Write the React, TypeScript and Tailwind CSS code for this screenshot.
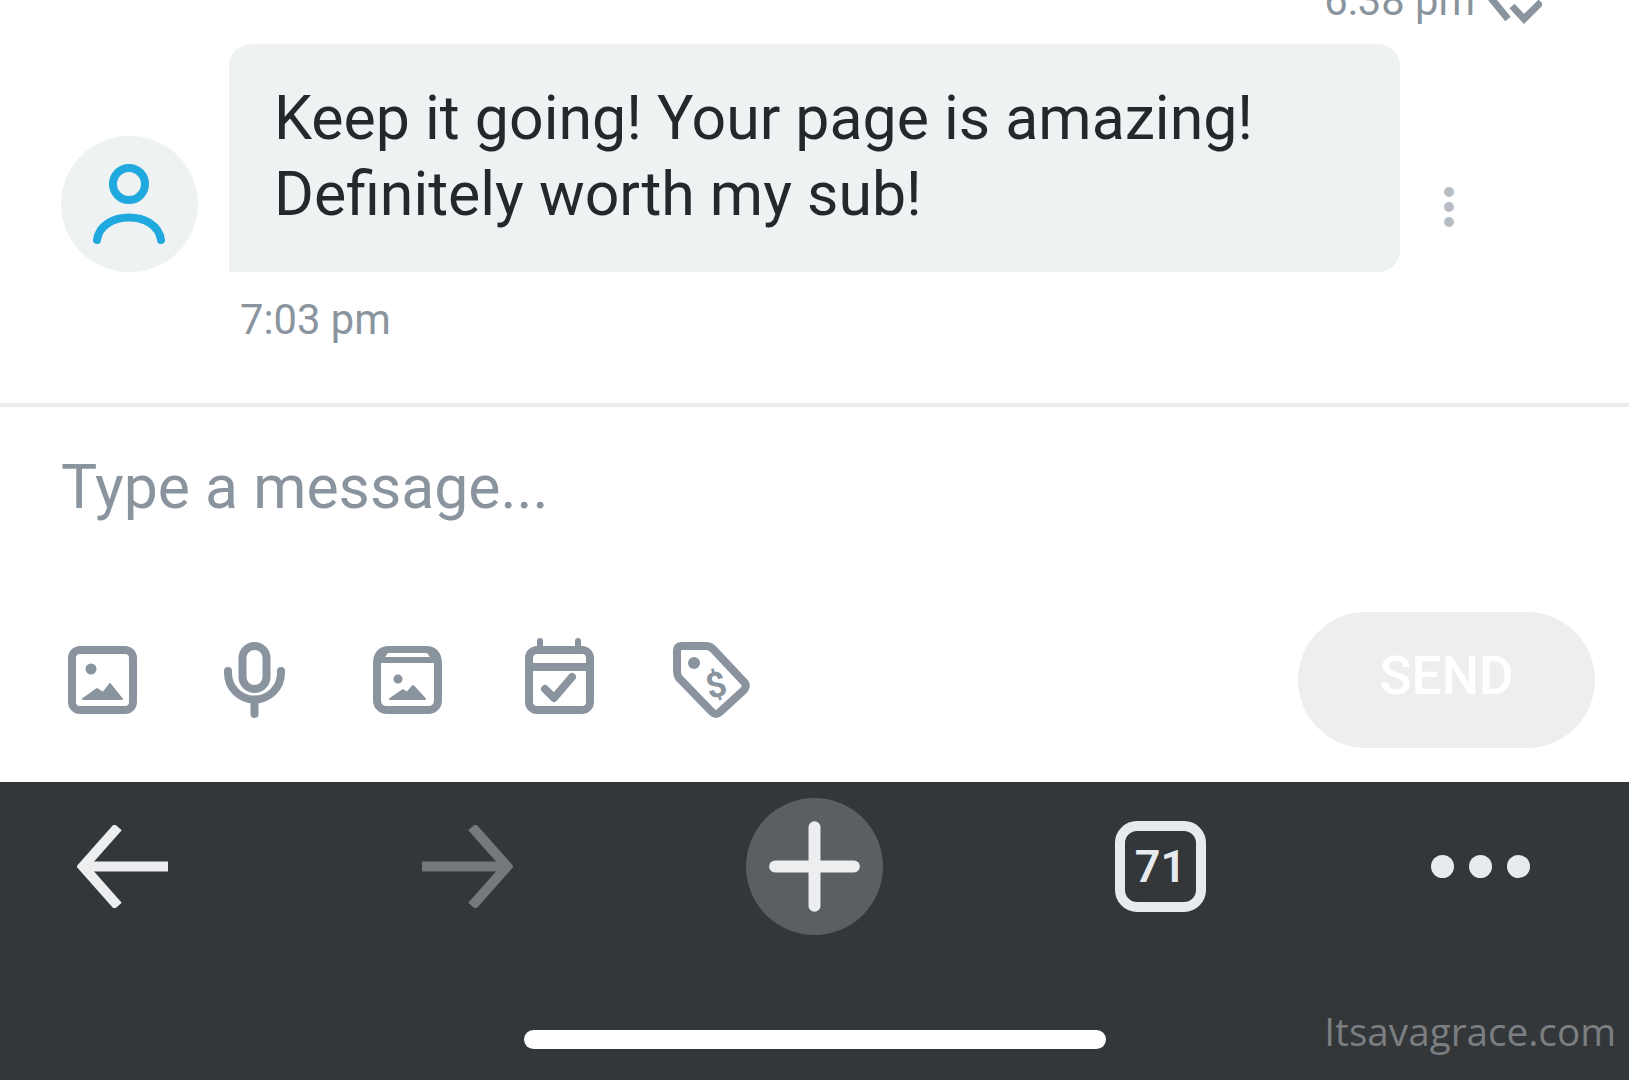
import { Plus } from "lucide-react";

const grey = "#8a949e";

function ImageIcon() {
  return (
    <svg width="69" height="68" viewBox="0 0 69 68" fill="none">
      <rect x="4" y="4" width="61" height="60" rx="8" stroke={grey} strokeWidth="8" />
      <circle cx="23" cy="23" r="5.5" fill={grey} />
      <path d="M15 53 L29 43 L35 47 L42 38 L54 53 Z" fill={grey} stroke={grey} strokeWidth="2" strokeLinejoin="round" />
    </svg>
  );
}

function MicIcon() {
  return (
    <svg width="61" height="76" viewBox="0 0 61 76" fill="none" stroke={grey} strokeWidth="8" strokeLinecap="round">
      <rect x="18.5" y="4" width="24" height="43" rx="12" />
      <path d="M4 29 v2 a26.5 26.5 0 0 0 53 0 v-2" />
      <path d="M30.5 58 V72" />
    </svg>
  );
}

function VaultIcon() {
  return (
    <svg width="69" height="68" viewBox="0 0 69 68" fill="none">
      <path d="M4 18 C4 9 8 4 16 4 H53 C61 4 65 9 65 18 V54 C65 60 61 64 55 64 H14 C8 64 4 60 4 54 Z" stroke={grey} strokeWidth="8" />
      <path d="M4 17 H65 L58 5 H11 Z" fill={grey} />
      <path d="M12 11 L15 7 H54 L57 11 Z" fill="#ffffff" />
      <circle cx="25" cy="33" r="4.5" fill={grey} />
      <path d="M17 53 L30 44 L34 47 L40 40 L52 53 Z" fill={grey} stroke={grey} strokeWidth="2" strokeLinejoin="round" />
    </svg>
  );
}

function CalendarIcon() {
  return (
    <svg width="69" height="76" viewBox="0 0 69 76" fill="none" stroke={grey} strokeWidth="8">
      <rect x="4" y="12" width="61" height="60" rx="8" />
      <path d="M4 29 H65" />
      <path d="M15 3 V11 M53 3 V11" strokeWidth="6" strokeLinecap="round" />
      <path d="M20 51 L29 60 L47 39" strokeLinecap="round" strokeLinejoin="round" />
    </svg>
  );
}

function TagIcon() {
  return (
    <svg width="77" height="76" viewBox="0 0 77 76" fill="none">
      <path d="M9 4 H33 Q37 4 40 7 L72 41 Q74 44 71 48 L47 70 Q43 74 39 70 L6 36 Q4 33 4 29 V9 Q4 4 9 4 Z" stroke={grey} strokeWidth="8" strokeLinejoin="round" />
      <circle cx="21" cy="21" r="6" fill={grey} />
      <text x="43" y="55" textAnchor="middle" transform="rotate(-15 43 43)" fill={grey} className="font-['Roboto',sans-serif] text-[35px] font-bold">
        $
      </text>
    </svg>
  );
}

function ArrowIcon({ flip, color }: { flip?: boolean; color: string }) {
  return (
    <svg width="91" height="83" viewBox="0 0 91 83" fill="none" stroke={color} strokeWidth="10" className={flip ? "-scale-x-100" : ""}>
      <path d="M41 2 L6 41.5 L41 81" />
      <path d="M7 41.5 H91" />
    </svg>
  );
}

export default function App() {
  return (
    <div className="flex h-[1080px] w-[1629px] flex-col overflow-hidden bg-white font-['Roboto',sans-serif]">
      {/* Chat thread */}
      <div className="flex-1">
        <div className="-mt-[24px] flex h-[68px] items-start justify-end pr-[87px]">
          <span className="text-[41.7px] leading-[49px] text-[#8a949e]">6:38 pm</span>
          <svg width="54" height="49" viewBox="0 0 54 49" fill="none" stroke={grey} strokeWidth="7" className="ml-[13px]">
            <path d="M2 21 L20 43" />
            <path d="M24 30 L36 43 L53 26" />
          </svg>
        </div>
        <div className="flex items-end pl-[61px]">
          <div className="flex h-[136px] w-[137px] items-center justify-center rounded-full bg-[#eff2f3] pr-[2px]">
            <svg width="74" height="80" viewBox="0 0 74 80" fill="none" stroke="#1fa9de" strokeWidth="8" strokeLinecap="round">
              <circle cx="37" cy="20" r="16" />
              <path d="M5 76 C9 46 65 46 69 76" />
            </svg>
          </div>
          <div className="ml-[31px] flex h-[228px] w-[1171px] items-center rounded-[22px] rounded-bl-none bg-[#eff2f3] pb-[2px] pl-[45px] text-[60.8px] leading-[76px] text-[#23282c]">
            <p>
              Keep it going! Your page is amazing!
              <br />
              Definitely worth my sub!
            </p>
          </div>
          <div className="mb-[45px] ml-[44px] flex flex-col gap-[5px]">
            <span className="h-[10px] w-[10px] rounded-full bg-[#b5bcc3]" />
            <span className="h-[10px] w-[10px] rounded-full bg-[#b5bcc3]" />
            <span className="h-[10px] w-[10px] rounded-full bg-[#b5bcc3]" />
          </div>
        </div>
        <p className="mt-[23px] pl-[240px] text-[41.7px] leading-[49px] text-[#8a949e]">7:03 pm</p>
      </div>

      {/* Composer */}
      <div className="border-t-4 border-[#e9ebed] pl-[61px] pr-[34px]">
        <p className="mt-[46px] text-[60.7px] leading-[70px] text-[#8a949e]">Type a message...</p>
        <div className="mt-[89px] flex items-center pb-[34px]">
          <div className="ml-[7px] flex items-center">
            <ImageIcon />
            <div className="ml-[87px]">
              <MicIcon />
            </div>
            <div className="ml-[88px]">
              <VaultIcon />
            </div>
            <div className="mb-[8px] ml-[83px]">
              <CalendarIcon />
            </div>
            <div className="ml-[79px]">
              <TagIcon />
            </div>
          </div>
          <button className="ml-auto flex h-[136px] w-[297px] items-center justify-center rounded-full bg-[#eceef0] pb-[6px] text-[53px] font-medium text-white">
            SEND
          </button>
        </div>
      </div>

      {/* Browser bar */}
      <div className="relative h-[298px] bg-[#34373a]">
        <div className="flex items-center pt-[16px]">
          <div className="ml-[77px]">
            <ArrowIcon color="#eceef0" />
          </div>
          <div className="ml-[254px]">
            <ArrowIcon flip color="#75797b" />
          </div>
          <div className="ml-[233px] flex h-[137px] w-[137px] items-center justify-center rounded-full bg-[#5b5e62]">
            <Plus size={135} strokeWidth={2.13} color="#eceef0" />
          </div>
          <div className="ml-[232px] flex h-[91px] w-[91px] items-center justify-center rounded-[22px] border-[10px] border-[#e8ebed] text-[45px] font-semibold text-[#e8ebed]">
            71
          </div>
          <div className="ml-[225px] flex gap-[15px]">
            <span className="h-[23px] w-[23px] rounded-full bg-[#e8ebed]" />
            <span className="h-[23px] w-[23px] rounded-full bg-[#e8ebed]" />
            <span className="h-[23px] w-[23px] rounded-full bg-[#e8ebed]" />
          </div>
        </div>
        <div className="mx-auto mt-[95px] h-[19px] w-[582px] rounded-full bg-white" />
        <span className="absolute right-[13px] top-[223px] font-['Open_Sans',sans-serif] text-[38.7px] leading-[52px] text-[#7b7e80]">
          Itsavagrace.com
        </span>
      </div>
    </div>
  );
}
